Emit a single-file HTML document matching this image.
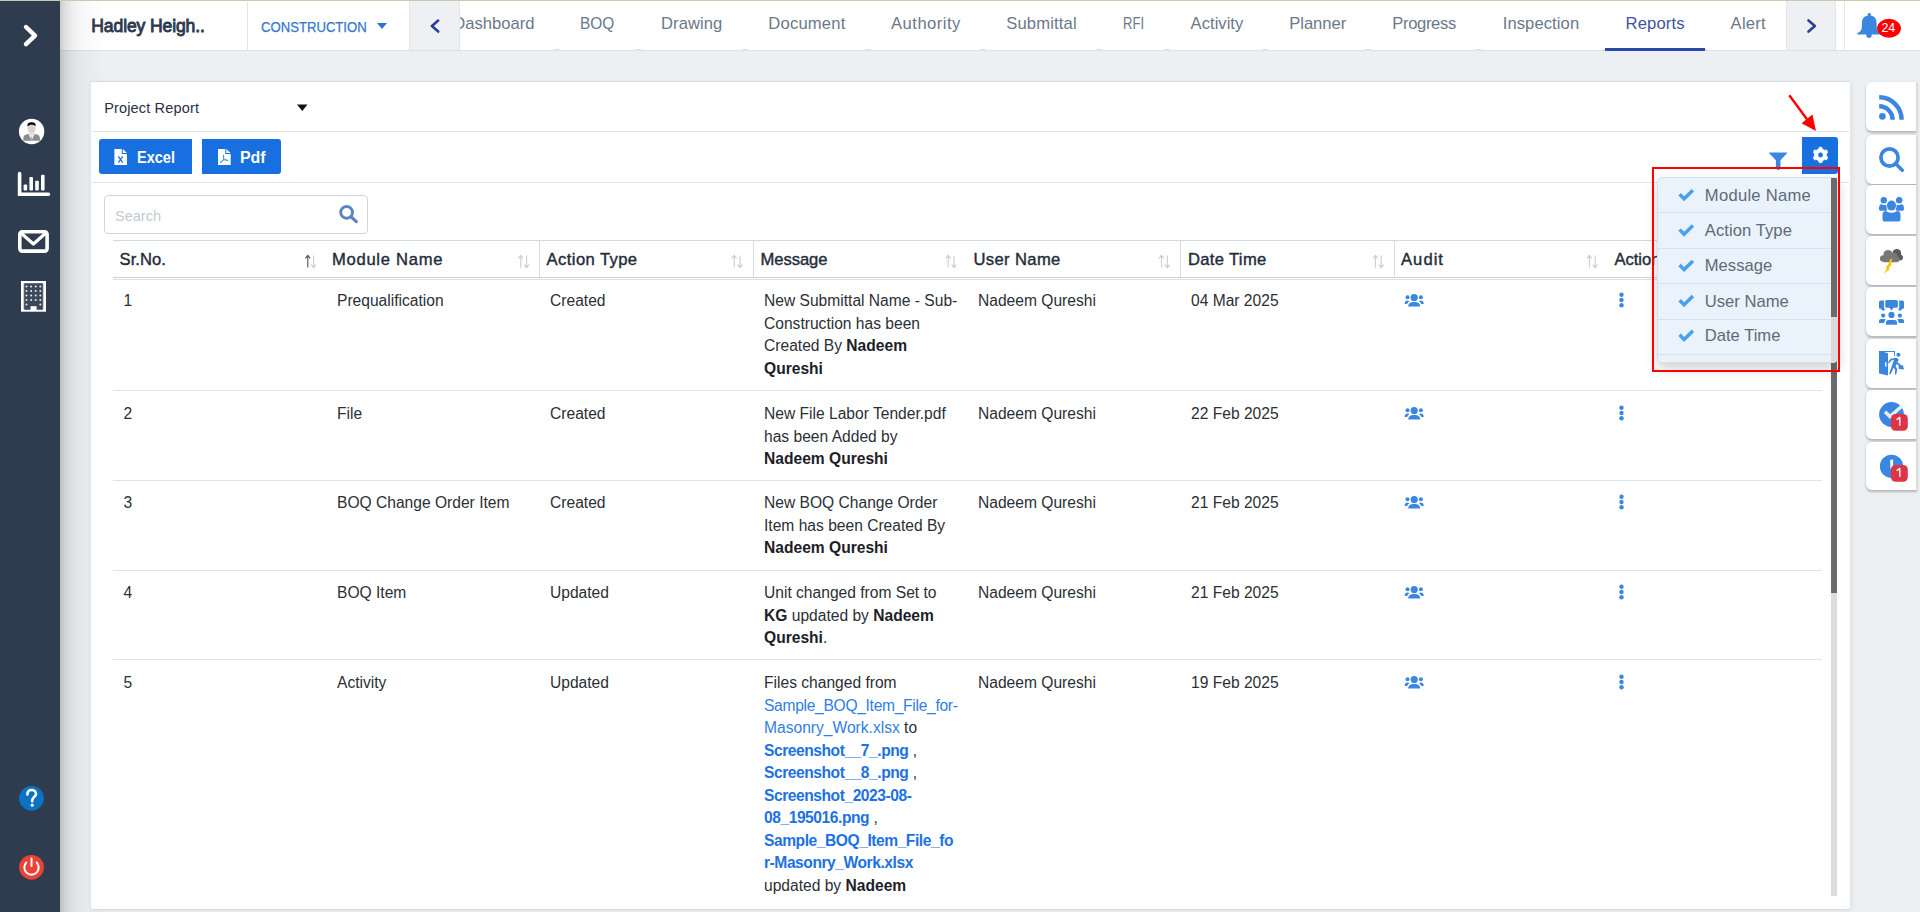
<!DOCTYPE html><html><head><meta charset="utf-8"><style>
*{margin:0;padding:0;box-sizing:border-box}
html,body{width:1920px;height:912px;overflow:hidden;background:#edf0f3;font-family:"Liberation Sans",sans-serif;color:#2b2f36}
.a{position:absolute;white-space:nowrap}
svg{position:absolute;overflow:visible}
b{font-weight:bold;color:#1d2127}
.lk{color:#2f80e2}
.lkb{color:#1c72e4;font-weight:bold;letter-spacing:-0.45px}
.lk1{letter-spacing:-0.3px}
</style></head><body>
<div class="a" style="left:60px;top:0;width:1860px;height:51px;background:#fff;border-bottom:1px solid #dde1e6"></div>
<div class="a" style="left:247px;top:2px;width:1px;height:49px;background:#e1e5ea"></div>
<div class="a" style="left:409px;top:1px;width:51px;height:49px;background:#eef0f4;border-left:1px solid #e3e6ea;border-right:1px solid #e3e6ea"></div>
<div class="a" style="left:1786px;top:1px;width:50px;height:49px;background:#eef0f4;border-left:1px solid #e3e6ea;border-right:1px solid #e3e6ea"></div>
<div class="a" style="left:1844px;top:1px;width:1px;height:49px;background:#e3e6ea"></div>
<div class="a" style="left:91.30px;top:15.46px;font-size:17.60px;line-height:22.88px;color:#2c3a4d;letter-spacing:-0.14px;-webkit-text-stroke:0.85px #2c3a4d;">Hadley Heigh..</div>
<div class="a" style="left:260.50px;top:17.65px;font-size:14.00px;line-height:18.20px;color:#3577cf;transform:scaleX(0.9373);transform-origin:0.00px 0;-webkit-text-stroke:0.25px #3577cf;">CONSTRUCTION</div>
<svg style="left:0;top:0" width="1" height="1"><path d="M377 23 L387 23 L382 29 Z" fill="#2f74cc"/></svg>
<svg style="left:0;top:0" width="1" height="1"><path d="M438.2 20.6 L431.9 26.1 L438.2 31.6" fill="none" stroke="#2b3f99" stroke-width="2.6" stroke-linecap="round" stroke-linejoin="round"/></svg>
<svg style="left:0;top:0" width="1" height="1"><path d="M1808.5 20.4 L1814.9 26 L1808.5 31.6" fill="none" stroke="#2b3f99" stroke-width="2.6" stroke-linecap="round" stroke-linejoin="round"/></svg>
<div class="a" style="left:460px;top:0;width:1326px;height:50px;overflow:hidden">
<div class="a" style="left:-6.77px;top:12.85px;font-size:16.60px;line-height:21.58px;color:#6b788a;">Dashboard</div>
<div class="a" style="left:120.20px;top:12.85px;font-size:16.60px;line-height:21.58px;color:#6b788a;transform:scaleX(0.9314);transform-origin:0.00px 0;">BOQ</div>
<div class="a" style="left:201.00px;top:12.85px;font-size:16.60px;line-height:21.58px;color:#6b788a;letter-spacing:0.06px;">Drawing</div>
<div class="a" style="left:308.30px;top:12.85px;font-size:16.60px;line-height:21.58px;color:#6b788a;letter-spacing:0.20px;">Document</div>
<div class="a" style="left:431.00px;top:12.85px;font-size:16.60px;line-height:21.58px;color:#6b788a;letter-spacing:0.49px;">Authority</div>
<div class="a" style="left:546.25px;top:12.85px;font-size:16.60px;line-height:21.58px;color:#6b788a;letter-spacing:0.15px;">Submittal</div>
<div class="a" style="left:663.00px;top:12.85px;font-size:16.60px;line-height:21.58px;color:#6b788a;transform:scaleX(0.7858);transform-origin:0.00px 0;">RFI</div>
<div class="a" style="left:730.60px;top:12.85px;font-size:16.60px;line-height:21.58px;color:#6b788a;letter-spacing:0.02px;">Activity</div>
<div class="a" style="left:829.20px;top:12.85px;font-size:16.60px;line-height:21.58px;color:#6b788a;letter-spacing:-0.02px;">Planner</div>
<div class="a" style="left:932.30px;top:12.85px;font-size:16.60px;line-height:21.58px;color:#6b788a;letter-spacing:-0.35px;">Progress</div>
<div class="a" style="left:1042.70px;top:12.85px;font-size:16.60px;line-height:21.58px;color:#6b788a;letter-spacing:0.09px;">Inspection</div>
<div class="a" style="left:1165.60px;top:12.85px;font-size:16.60px;line-height:21.58px;color:#3d52a3;letter-spacing:0.13px;">Reports</div>
<div class="a" style="left:1270.60px;top:12.85px;font-size:16.60px;line-height:21.58px;color:#6b788a;letter-spacing:0.25px;">Alert</div>
<div class="a" style="left:94.0px;top:49px;width:6px;height:1px;background:#dfe3e8"></div>
<div class="a" style="left:174.5px;top:49px;width:6px;height:1px;background:#dfe3e8"></div>
<div class="a" style="left:282.0px;top:49px;width:6px;height:1px;background:#dfe3e8"></div>
<div class="a" style="left:405.0px;top:49px;width:6px;height:1px;background:#dfe3e8"></div>
<div class="a" style="left:520.0px;top:49px;width:6px;height:1px;background:#dfe3e8"></div>
<div class="a" style="left:636.0px;top:49px;width:6px;height:1px;background:#dfe3e8"></div>
<div class="a" style="left:704.0px;top:49px;width:6px;height:1px;background:#dfe3e8"></div>
<div class="a" style="left:802.0px;top:49px;width:6px;height:1px;background:#dfe3e8"></div>
<div class="a" style="left:905.0px;top:49px;width:6px;height:1px;background:#dfe3e8"></div>
<div class="a" style="left:1015.0px;top:49px;width:6px;height:1px;background:#dfe3e8"></div>
<div class="a" style="left:1142.0px;top:49px;width:6px;height:1px;background:#dfe3e8"></div>
<div class="a" style="left:1241.0px;top:49px;width:6px;height:1px;background:#dfe3e8"></div>
</div>
<div class="a" style="left:1605px;top:48px;width:100px;height:3px;background:#2b49a6"></div>
<svg style="left:0;top:0" width="1" height="1">
<circle cx="1869.3" cy="14.6" r="1.7" fill="#3b87e0"/>
<path d="M1862 22.5 C1862 18 1865 15.6 1869.3 15.6 C1873.6 15.6 1876.5 18 1876.5 22.5 L1876.8 28 C1877 31 1878.5 32.3 1879.5 33.3 L1879.5 34.6 L1857.3 34.6 L1857.3 33.3 C1858.8 32.3 1861.5 31 1861.7 28 Z" fill="#3b87e0"/>
<circle cx="1869" cy="35.2" r="2.7" fill="#3b87e0"/>
<ellipse cx="1889" cy="28.35" rx="11.9" ry="9.5" fill="#ff0000"/>
</svg>
<div class="a" style="left:1881.50px;top:20.34px;font-size:12.50px;line-height:16.25px;color:#fff;letter-spacing:-0.30px;">24</div>
<div class="a" style="left:0;top:0;width:60px;height:912px;background:#2f3c4f"></div>
<div class="a" style="left:60px;top:0;width:45px;height:912px;background:linear-gradient(to right,rgba(0,0,0,.20),rgba(0,0,0,.12) 12%,rgba(0,0,0,.06) 30%,rgba(0,0,0,.025) 55%,rgba(0,0,0,0))"></div>
<div class="a" style="left:0;top:0;width:1920px;height:1px;background:#c3cbb1"></div>
<svg style="left:0;top:0" width="1" height="1">
<path d="M26 27 L35 35.6 L26 44.2" fill="none" stroke="#fff" stroke-width="4.4" stroke-linecap="round" stroke-linejoin="round"/>
<circle cx="31.6" cy="131.45" r="12.7" fill="#fff"/>
<path d="M23.2 140.7 L23.5 137 C23.8 135.5 25 134.8 27 134.3 L30 133.5 L33.2 133.5 L36.2 134.3 C38.2 134.8 39.4 135.5 39.7 137 L40.2 140.7 Z" fill="#8c8c8c"/>
<path d="M28.3 133.8 L31.6 140.5 L35 133.8 Z" fill="#e8e8e8"/>
<path d="M31.6 135.5 L31 139.5 L31.6 140.5 L32.2 139.5 Z" fill="#a8a8a8"/>
<rect x="29.8" y="130.5" width="3.6" height="3.5" fill="#dedede"/>
<ellipse cx="31.6" cy="128.4" rx="4.1" ry="4.8" fill="#d4d4d4"/>
<path d="M27.5 126.6 C27.1 123 29 122.2 31.6 122.2 C34.2 122.2 35.9 123 35.7 126.2 C34.6 124.9 32.6 124.6 31.6 124.7 C30 124.7 28.5 125.1 27.5 126.6 Z" fill="#000"/>
<path d="M19.6 173.5 L19.6 194.2 L48.5 194.2" fill="none" stroke="#fff" stroke-width="3.6" stroke-linecap="round"/>
<rect x="23.6" y="184.6" width="3.6" height="6" rx="1" fill="#fff"/>
<rect x="29.4" y="177" width="3.6" height="13.6" rx="1" fill="#fff"/>
<rect x="35.2" y="180.7" width="3.6" height="9.9" rx="1" fill="#fff"/>
<rect x="41" y="174.7" width="3.6" height="15.9" rx="1" fill="#fff"/>
<rect x="19.8" y="231.8" width="27.3" height="19.3" rx="2.5" fill="none" stroke="#fff" stroke-width="3.6"/>
<path d="M21.5 233.5 L33.4 244 L45.3 233.5" fill="none" stroke="#fff" stroke-width="3.2" stroke-linejoin="round"/>
<rect x="21" y="281" width="25" height="30.7" fill="#fff"/>
<rect x="23.6" y="283" width="19.8" height="27" rx="1" fill="#8a93a0"/>
<rect x="24.3" y="283.6" width="18.4" height="25.8" rx="1" fill="#3b475a"/>
<rect x="30.5" y="306.2" width="6.1" height="4" fill="#fff"/>
</svg>
<svg style="left:0;top:0" width="1" height="1"><circle cx="26.5" cy="286.5" r="1" fill="#e8ebef"/><circle cx="31.1" cy="286.5" r="1" fill="#e8ebef"/><circle cx="35.7" cy="286.5" r="1" fill="#e8ebef"/><circle cx="40.3" cy="286.5" r="1" fill="#e8ebef"/><circle cx="26.5" cy="291.0" r="1" fill="#e8ebef"/><circle cx="31.1" cy="291.0" r="1" fill="#e8ebef"/><circle cx="35.7" cy="291.0" r="1" fill="#e8ebef"/><circle cx="40.3" cy="291.0" r="1" fill="#e8ebef"/><circle cx="26.5" cy="295.5" r="1" fill="#e8ebef"/><circle cx="31.1" cy="295.5" r="1" fill="#e8ebef"/><circle cx="35.7" cy="295.5" r="1" fill="#e8ebef"/><circle cx="40.3" cy="295.5" r="1" fill="#e8ebef"/><circle cx="26.5" cy="300.0" r="1" fill="#e8ebef"/><circle cx="31.1" cy="300.0" r="1" fill="#e8ebef"/><circle cx="35.7" cy="300.0" r="1" fill="#e8ebef"/><circle cx="40.3" cy="300.0" r="1" fill="#e8ebef"/><circle cx="26.5" cy="304.5" r="1" fill="#e8ebef"/><circle cx="40.3" cy="304.5" r="1" fill="#e8ebef"/></svg>
<svg style="left:0;top:0" width="1" height="1">
<circle cx="31.5" cy="798.3" r="12.4" fill="#0b73c2"/>
<path d="M27.4 794.5 C27.4 791.5 29.3 790 31.7 790 C34.2 790 36 791.6 36 794 C36 796.6 32.5 797.2 32.2 800.2 L32.2 801.3" fill="none" stroke="#fff" stroke-width="2.6" stroke-linecap="round"/>
<circle cx="32.2" cy="805.2" r="1.6" fill="#fff"/>
<circle cx="31.5" cy="867.3" r="12.4" fill="#ea4335"/>
<path d="M26.3 862.5 A7.2 7.2 0 1 0 36.7 862.5" fill="none" stroke="#fff" stroke-width="2" stroke-linecap="round"/>
<path d="M31.5 858.5 L31.5 866" fill="none" stroke="#fff" stroke-width="2" stroke-linecap="round"/>
</svg>
<div class="a" style="left:90px;top:81px;width:1761px;height:829px;background:#fff;border:1px solid #e3e7eb;border-top-color:#d9dde2;border-bottom-color:#d9dde2;border-radius:0 4px 4px 4px;box-shadow:1px 1px 5px rgba(0,0,0,.07)"></div>
<div class="a" style="left:104.20px;top:98.85px;font-size:14.50px;line-height:18.85px;color:#283142;letter-spacing:0.16px;">Project Report</div>
<svg style="left:0;top:0" width="1" height="1"><path d="M297 104.5 L307.5 104.5 L302.25 111 Z" fill="#111"/></svg>
<div class="a" style="left:92px;top:131px;width:1757px;height:1px;background:#e2e6ea"></div>
<div class="a" style="left:92px;top:182px;width:1757px;height:1px;background:#e2e6ea"></div>
<div class="a" style="left:99px;top:139px;width:93px;height:35px;background:#186fe0;border-radius:3px 0 0 3px"></div>
<div class="a" style="left:202px;top:139px;width:79px;height:35px;background:#186fe0;border-radius:0 3px 3px 0"></div>
<svg style="left:0;top:0" width="1" height="1">
<path d="M114.4 149 L121.8 149 L121.8 154.1 L127 154.1 L127 165 L114.4 165 Z" fill="#fff"/>
<path d="M122.8 149 L127 153.1 L122.8 153.1 Z" fill="#fff"/>
<path d="M118.3 156.3 L122.7 162.6 M122.7 156.3 L118.3 162.6" stroke="#186fe0" stroke-width="1.25"/>
<path d="M218 149 L225.3 149 L225.3 154.1 L230.7 154.1 L230.7 165 L218 165 Z" fill="#fff"/>
<path d="M226.3 149 L230.7 153.1 L226.3 153.1 Z" fill="#fff"/>
<path d="M223.5 155.3 L223.8 159.5 L220.6 162.6 M223.8 159.5 L227.6 160.4" fill="none" stroke="#3a8ae8" stroke-width="1.1" stroke-linecap="round"/>
</svg>
<div class="a" style="left:137.10px;top:147.26px;font-size:16.80px;line-height:21.84px;color:#fff;font-weight:bold;transform:scaleX(0.8650);transform-origin:0.00px 0;">Excel</div>
<div class="a" style="left:240.00px;top:147.26px;font-size:16.80px;line-height:21.84px;color:#fff;font-weight:bold;transform:scaleX(0.9472);transform-origin:0.00px 0;">Pdf</div>
<svg style="left:0;top:0" width="1" height="1">
<path d="M1769.3 152.4 Q1768.8 152.4 1769.2 153.2 L1775.9 160.2 L1775.9 168.8 L1778.2 170.2 L1780.5 168.8 L1780.5 160.2 L1787 153.2 Q1787.4 152.4 1786.9 152.4 Z" fill="#3b86e0"/>
</svg>
<div class="a" style="left:1802px;top:137px;width:36px;height:37px;background:#186fe0;border-radius:0 3px 3px 0"></div>
<svg style="left:0;top:0" width="1" height="1"><path d="M1817.45 149.62 L1818.66 148.88 L1818.99 147.15 L1822.01 147.15 L1822.34 148.88 L1823.55 149.62 L1823.55 149.62 L1824.80 150.29 L1826.46 149.72 L1827.97 152.33 L1826.64 153.48 L1826.60 154.90 L1826.60 154.90 L1826.64 156.32 L1827.97 157.47 L1826.46 160.08 L1824.80 159.51 L1823.55 160.18 L1823.55 160.18 L1822.34 160.92 L1822.01 162.65 L1818.99 162.65 L1818.66 160.92 L1817.45 160.18 L1817.45 160.18 L1816.20 159.51 L1814.54 160.08 L1813.03 157.47 L1814.36 156.32 L1814.40 154.90 L1814.40 154.90 L1814.36 153.48 L1813.03 152.33 L1814.54 149.72 L1816.20 150.29 L1817.45 149.62 Z M1823.1 154.9 A2.6 2.6 0 1 0 1817.9 154.9 A2.6 2.6 0 1 0 1823.1 154.9 Z" fill="#fff" fill-rule="evenodd" stroke="#fff" stroke-width="0.5" stroke-linejoin="round"/></svg>
<div class="a" style="left:104px;top:195px;width:264px;height:39px;border:1px solid #cfd6de;border-radius:4px;background:#fff"></div>
<div class="a" style="left:115.00px;top:207.25px;font-size:14.50px;line-height:18.85px;color:#c3cad4;letter-spacing:0.01px;">Search</div>
<svg style="left:0;top:0" width="1" height="1">
<circle cx="346.6" cy="212.4" r="5.9" fill="none" stroke="#5a84be" stroke-width="2.9"/>
<path d="M351 216.8 L356.3 221.6" stroke="#5a84be" stroke-width="3.2" stroke-linecap="round"/>
</svg>
<div class="a" style="left:113px;top:240px;width:1709px;height:1px;background:#d3d9e0"></div>
<div class="a" style="left:113px;top:277px;width:1709px;height:1px;background:#cdd3da"></div>
<div class="a" style="left:113px;top:279px;width:1709px;height:1px;background:#dde1e6"></div>
<div class="a" style="left:539px;top:241px;width:1px;height:36px;background:#d8dde3"></div>
<div class="a" style="left:753px;top:241px;width:1px;height:36px;background:#d8dde3"></div>
<div class="a" style="left:1180px;top:241px;width:1px;height:36px;background:#d8dde3"></div>
<div class="a" style="left:1394px;top:241px;width:1px;height:36px;background:#d8dde3"></div>
<div class="a" style="left:119.50px;top:249.05px;font-size:16.60px;line-height:21.58px;color:#1f2c3b;letter-spacing:0.07px;-webkit-text-stroke:0.4px #1f2c3b;">Sr.No.</div>
<div class="a" style="left:332.00px;top:249.05px;font-size:16.60px;line-height:21.58px;color:#1f2c3b;letter-spacing:0.71px;-webkit-text-stroke:0.4px #1f2c3b;">Module Name</div>
<div class="a" style="left:546.60px;top:249.05px;font-size:16.60px;line-height:21.58px;color:#1f2c3b;letter-spacing:0.41px;-webkit-text-stroke:0.4px #1f2c3b;">Action Type</div>
<div class="a" style="left:760.60px;top:249.05px;font-size:16.60px;line-height:21.58px;color:#1f2c3b;letter-spacing:-0.07px;-webkit-text-stroke:0.4px #1f2c3b;">Message</div>
<div class="a" style="left:973.50px;top:249.05px;font-size:16.60px;line-height:21.58px;color:#1f2c3b;letter-spacing:0.36px;-webkit-text-stroke:0.4px #1f2c3b;">User Name</div>
<div class="a" style="left:1187.90px;top:249.05px;font-size:16.60px;line-height:21.58px;color:#1f2c3b;letter-spacing:0.35px;-webkit-text-stroke:0.4px #1f2c3b;">Date Time</div>
<div class="a" style="left:1401.00px;top:249.05px;font-size:16.60px;line-height:21.58px;color:#1f2c3b;letter-spacing:1.04px;-webkit-text-stroke:0.4px #1f2c3b;">Audit</div>
<div class="a" style="left:1614.40px;top:249.05px;font-size:16.60px;line-height:21.58px;color:#1f2c3b;-webkit-text-stroke:0.4px #1f2c3b;">Action</div>
<svg style="left:0;top:0" width="1" height="1"><path d="M307.8 267.5 L307.8 255.5 M305.4 258.3 L307.8 255.3 L310.2 258.3" fill="none" stroke="#50555e" stroke-width="1.1"/><path d="M313.6 255.5 L313.6 267.5 M311.2 264.7 L313.6 267.7 L316.0 264.7" fill="none" stroke="#c8cdd4" stroke-width="1.1"/><path d="M520.8 267.5 L520.8 255.5 M518.4 258.3 L520.8 255.3 L523.2 258.3" fill="none" stroke="#c8cdd4" stroke-width="1.1"/><path d="M526.6 255.5 L526.6 267.5 M524.2 264.7 L526.6 267.7 L529.0 264.7" fill="none" stroke="#c8cdd4" stroke-width="1.1"/><path d="M734.2 267.5 L734.2 255.5 M731.8 258.3 L734.2 255.3 L736.6 258.3" fill="none" stroke="#c8cdd4" stroke-width="1.1"/><path d="M740.0 255.5 L740.0 267.5 M737.6 264.7 L740.0 267.7 L742.4 264.7" fill="none" stroke="#c8cdd4" stroke-width="1.1"/><path d="M948.2 267.5 L948.2 255.5 M945.8 258.3 L948.2 255.3 L950.6 258.3" fill="none" stroke="#c8cdd4" stroke-width="1.1"/><path d="M954.0 255.5 L954.0 267.5 M951.6 264.7 L954.0 267.7 L956.4 264.7" fill="none" stroke="#c8cdd4" stroke-width="1.1"/><path d="M1161.5 267.5 L1161.5 255.5 M1159.1 258.3 L1161.5 255.3 L1163.9 258.3" fill="none" stroke="#c8cdd4" stroke-width="1.1"/><path d="M1167.3 255.5 L1167.3 267.5 M1164.9 264.7 L1167.3 267.7 L1169.7 264.7" fill="none" stroke="#c8cdd4" stroke-width="1.1"/><path d="M1375.4 267.5 L1375.4 255.5 M1373.0 258.3 L1375.4 255.3 L1377.8 258.3" fill="none" stroke="#c8cdd4" stroke-width="1.1"/><path d="M1381.2 255.5 L1381.2 267.5 M1378.8 264.7 L1381.2 267.7 L1383.6 264.7" fill="none" stroke="#c8cdd4" stroke-width="1.1"/><path d="M1589.4 267.5 L1589.4 255.5 M1587.0 258.3 L1589.4 255.3 L1591.8 258.3" fill="none" stroke="#c8cdd4" stroke-width="1.1"/><path d="M1595.2 255.5 L1595.2 267.5 M1592.8 264.7 L1595.2 267.7 L1597.6 264.7" fill="none" stroke="#c8cdd4" stroke-width="1.1"/></svg>
<div class="a" style="left:113px;top:390px;width:1709px;height:1px;background:#dfe3e7"></div>
<div class="a" style="left:113px;top:480px;width:1709px;height:1px;background:#dfe3e7"></div>
<div class="a" style="left:113px;top:570px;width:1709px;height:1px;background:#dfe3e7"></div>
<div class="a" style="left:113px;top:659px;width:1709px;height:1px;background:#dfe3e7"></div>
<div class="a" style="left:123.60px;top:291.05px;font-size:15.60px;line-height:20.28px;color:#2b2f36;">1</div>
<div class="a" style="left:337.00px;top:291.05px;font-size:15.60px;line-height:20.28px;color:#2b2f36;">Prequalification</div>
<div class="a" style="left:550.00px;top:291.05px;font-size:15.60px;line-height:20.28px;color:#2b2f36;">Created</div>
<div class="a" style="left:764.00px;top:291.05px;font-size:15.60px;line-height:20.28px;color:#2b2f36;">New Submittal Name - Sub-</div>
<div class="a" style="left:764.00px;top:313.55px;font-size:15.60px;line-height:20.28px;color:#2b2f36;">Construction has been</div>
<div class="a" style="left:764.00px;top:336.05px;font-size:15.60px;line-height:20.28px;color:#2b2f36;">Created By <b>Nadeem</b></div>
<div class="a" style="left:764.00px;top:358.55px;font-size:15.60px;line-height:20.28px;color:#2b2f36;"><b>Qureshi</b></div>
<div class="a" style="left:978.00px;top:291.05px;font-size:15.60px;line-height:20.28px;color:#2b2f36;">Nadeem Qureshi</div>
<div class="a" style="left:1191.00px;top:291.05px;font-size:15.60px;line-height:20.28px;color:#2b2f36;">04 Mar 2025</div>
<div class="a" style="left:123.60px;top:404.05px;font-size:15.60px;line-height:20.28px;color:#2b2f36;">2</div>
<div class="a" style="left:337.00px;top:404.05px;font-size:15.60px;line-height:20.28px;color:#2b2f36;">File</div>
<div class="a" style="left:550.00px;top:404.05px;font-size:15.60px;line-height:20.28px;color:#2b2f36;">Created</div>
<div class="a" style="left:764.00px;top:404.05px;font-size:15.60px;line-height:20.28px;color:#2b2f36;">New File Labor Tender.pdf</div>
<div class="a" style="left:764.00px;top:426.55px;font-size:15.60px;line-height:20.28px;color:#2b2f36;">has been Added by</div>
<div class="a" style="left:764.00px;top:449.05px;font-size:15.60px;line-height:20.28px;color:#2b2f36;"><b>Nadeem Qureshi</b></div>
<div class="a" style="left:978.00px;top:404.05px;font-size:15.60px;line-height:20.28px;color:#2b2f36;">Nadeem Qureshi</div>
<div class="a" style="left:1191.00px;top:404.05px;font-size:15.60px;line-height:20.28px;color:#2b2f36;">22 Feb 2025</div>
<div class="a" style="left:123.60px;top:493.05px;font-size:15.60px;line-height:20.28px;color:#2b2f36;">3</div>
<div class="a" style="left:337.00px;top:493.05px;font-size:15.60px;line-height:20.28px;color:#2b2f36;">BOQ Change Order Item</div>
<div class="a" style="left:550.00px;top:493.05px;font-size:15.60px;line-height:20.28px;color:#2b2f36;">Created</div>
<div class="a" style="left:764.00px;top:493.05px;font-size:15.60px;line-height:20.28px;color:#2b2f36;">New BOQ Change Order</div>
<div class="a" style="left:764.00px;top:515.55px;font-size:15.60px;line-height:20.28px;color:#2b2f36;">Item has been Created By</div>
<div class="a" style="left:764.00px;top:538.05px;font-size:15.60px;line-height:20.28px;color:#2b2f36;"><b>Nadeem Qureshi</b></div>
<div class="a" style="left:978.00px;top:493.05px;font-size:15.60px;line-height:20.28px;color:#2b2f36;">Nadeem Qureshi</div>
<div class="a" style="left:1191.00px;top:493.05px;font-size:15.60px;line-height:20.28px;color:#2b2f36;">21 Feb 2025</div>
<div class="a" style="left:123.60px;top:583.05px;font-size:15.60px;line-height:20.28px;color:#2b2f36;">4</div>
<div class="a" style="left:337.00px;top:583.05px;font-size:15.60px;line-height:20.28px;color:#2b2f36;">BOQ Item</div>
<div class="a" style="left:550.00px;top:583.05px;font-size:15.60px;line-height:20.28px;color:#2b2f36;">Updated</div>
<div class="a" style="left:764.00px;top:583.05px;font-size:15.60px;line-height:20.28px;color:#2b2f36;">Unit changed from Set to</div>
<div class="a" style="left:764.00px;top:605.55px;font-size:15.60px;line-height:20.28px;color:#2b2f36;"><b>KG</b> updated by <b>Nadeem</b></div>
<div class="a" style="left:764.00px;top:628.05px;font-size:15.60px;line-height:20.28px;color:#2b2f36;"><b>Qureshi</b>.</div>
<div class="a" style="left:978.00px;top:583.05px;font-size:15.60px;line-height:20.28px;color:#2b2f36;">Nadeem Qureshi</div>
<div class="a" style="left:1191.00px;top:583.05px;font-size:15.60px;line-height:20.28px;color:#2b2f36;">21 Feb 2025</div>
<div class="a" style="left:123.60px;top:673.05px;font-size:15.60px;line-height:20.28px;color:#2b2f36;">5</div>
<div class="a" style="left:337.00px;top:673.05px;font-size:15.60px;line-height:20.28px;color:#2b2f36;">Activity</div>
<div class="a" style="left:550.00px;top:673.05px;font-size:15.60px;line-height:20.28px;color:#2b2f36;">Updated</div>
<div class="a" style="left:764.00px;top:673.05px;font-size:15.60px;line-height:20.28px;color:#2b2f36;">Files changed from</div>
<div class="a" style="left:764.00px;top:695.55px;font-size:15.60px;line-height:20.28px;color:#2b2f36;"><span class="lk lk1">Sample_BOQ_Item_File_for-</span></div>
<div class="a" style="left:764.00px;top:718.05px;font-size:15.60px;line-height:20.28px;color:#2b2f36;"><span class="lk">Masonry_Work.xlsx</span> to</div>
<div class="a" style="left:764.00px;top:740.55px;font-size:15.60px;line-height:20.28px;color:#2b2f36;"><span class="lkb">Screenshot__7_.png</span> ,</div>
<div class="a" style="left:764.00px;top:763.05px;font-size:15.60px;line-height:20.28px;color:#2b2f36;"><span class="lkb">Screenshot__8_.png</span> ,</div>
<div class="a" style="left:764.00px;top:785.55px;font-size:15.60px;line-height:20.28px;color:#2b2f36;"><span class="lkb">Screenshot_2023-08-</span></div>
<div class="a" style="left:764.00px;top:808.05px;font-size:15.60px;line-height:20.28px;color:#2b2f36;"><span class="lkb">08_195016.png</span> ,</div>
<div class="a" style="left:764.00px;top:830.55px;font-size:15.60px;line-height:20.28px;color:#2b2f36;"><span class="lkb">Sample_BOQ_Item_File_fo</span></div>
<div class="a" style="left:764.00px;top:853.05px;font-size:15.60px;line-height:20.28px;color:#2b2f36;"><span class="lkb">r-Masonry_Work.xlsx</span></div>
<div class="a" style="left:764.00px;top:875.55px;font-size:15.60px;line-height:20.28px;color:#2b2f36;">updated by <b>Nadeem</b></div>
<div class="a" style="left:978.00px;top:673.05px;font-size:15.60px;line-height:20.28px;color:#2b2f36;">Nadeem Qureshi</div>
<div class="a" style="left:1191.00px;top:673.05px;font-size:15.60px;line-height:20.28px;color:#2b2f36;">19 Feb 2025</div>
<svg style="left:0;top:0" width="1" height="1"><defs><g id="aud" fill="#3b86e0">
<circle cx="1414.2" cy="298" r="3.6"/>
<path d="M1408.2 307 C1408.2 303.5 1410.5 302.3 1414.2 302.3 C1417.9 302.3 1420.2 303.5 1420.2 307 Z"/>
<circle cx="1407.5" cy="297.6" r="2"/>
<circle cx="1420.9" cy="297.6" r="2"/>
<path d="M1404.7 304.5 C1404.7 301.8 1405.8 301 1407.6 301 C1408.4 301 1409 301.2 1409.4 301.6 C1408 302.5 1407.3 303.5 1407.2 304.5 Z"/>
<path d="M1423.7 304.5 C1423.7 301.8 1422.6 301 1420.8 301 C1420 301 1419.4 301.2 1419 301.6 C1420.4 302.5 1421.1 303.5 1421.2 304.5 Z"/>
</g></defs><use href="#aud" x="0" y="-0.4"/><circle cx="1621.5" cy="294.80" r="2.2" fill="#3b86e0"/><circle cx="1621.5" cy="300.05" r="2.2" fill="#3b86e0"/><circle cx="1621.5" cy="305.30" r="2.2" fill="#3b86e0"/><use href="#aud" x="0" y="112.6"/><circle cx="1621.5" cy="407.80" r="2.2" fill="#3b86e0"/><circle cx="1621.5" cy="413.05" r="2.2" fill="#3b86e0"/><circle cx="1621.5" cy="418.30" r="2.2" fill="#3b86e0"/><use href="#aud" x="0" y="201.6"/><circle cx="1621.5" cy="496.80" r="2.2" fill="#3b86e0"/><circle cx="1621.5" cy="502.05" r="2.2" fill="#3b86e0"/><circle cx="1621.5" cy="507.30" r="2.2" fill="#3b86e0"/><use href="#aud" x="0" y="291.6"/><circle cx="1621.5" cy="586.80" r="2.2" fill="#3b86e0"/><circle cx="1621.5" cy="592.05" r="2.2" fill="#3b86e0"/><circle cx="1621.5" cy="597.30" r="2.2" fill="#3b86e0"/><use href="#aud" x="0" y="381.6"/><circle cx="1621.5" cy="676.80" r="2.2" fill="#3b86e0"/><circle cx="1621.5" cy="682.05" r="2.2" fill="#3b86e0"/><circle cx="1621.5" cy="687.30" r="2.2" fill="#3b86e0"/></svg>
<div class="a" style="left:1831px;top:183px;width:6px;height:713px;background:#dcdcdc"></div>
<div class="a" style="left:1831px;top:183px;width:6px;height:410px;background:#6b6b6b"></div>
<div class="a" style="left:1866px;top:82.0px;width:51px;height:48.5px;background:#fff;border-right:1px solid #d9dde2;border-radius:6px 0 0 6px;box-shadow:0 1.5px 2.5px rgba(0,0,0,.25)"></div>
<div class="a" style="left:1866px;top:135.0px;width:51px;height:48.5px;background:#fff;border-right:1px solid #d9dde2;border-radius:6px 0 0 6px;box-shadow:0 1.5px 2.5px rgba(0,0,0,.25)"></div>
<div class="a" style="left:1866px;top:185.0px;width:51px;height:48.5px;background:#fff;border-right:1px solid #d9dde2;border-radius:6px 0 0 6px;box-shadow:0 1.5px 2.5px rgba(0,0,0,.25)"></div>
<div class="a" style="left:1866px;top:236.0px;width:51px;height:48.5px;background:#fff;border-right:1px solid #d9dde2;border-radius:6px 0 0 6px;box-shadow:0 1.5px 2.5px rgba(0,0,0,.25)"></div>
<div class="a" style="left:1866px;top:287.0px;width:51px;height:48.5px;background:#fff;border-right:1px solid #d9dde2;border-radius:6px 0 0 6px;box-shadow:0 1.5px 2.5px rgba(0,0,0,.25)"></div>
<div class="a" style="left:1866px;top:339.0px;width:51px;height:48.5px;background:#fff;border-right:1px solid #d9dde2;border-radius:6px 0 0 6px;box-shadow:0 1.5px 2.5px rgba(0,0,0,.25)"></div>
<div class="a" style="left:1866px;top:390.0px;width:51px;height:48.5px;background:#fff;border-right:1px solid #d9dde2;border-radius:6px 0 0 6px;box-shadow:0 1.5px 2.5px rgba(0,0,0,.25)"></div>
<div class="a" style="left:1866px;top:441.5px;width:51px;height:48.5px;background:#fff;border-right:1px solid #d9dde2;border-radius:6px 0 0 6px;box-shadow:0 1.5px 2.5px rgba(0,0,0,.25)"></div>
<svg style="left:0;top:0" width="1" height="1">
<g fill="#3a86e0">
<circle cx="1882.4" cy="116.4" r="3.3"/>
<path d="M1879.2 106.3 A13.4 13.4 0 0 1 1892.6 119.7" fill="none" stroke="#3a86e0" stroke-width="4.4"/>
<path d="M1879.2 97.3 A22.4 22.4 0 0 1 1901.6 119.7" fill="none" stroke="#3a86e0" stroke-width="4.4"/>
</g>
<circle cx="1889.5" cy="157.5" r="8.6" fill="none" stroke="#3a86e0" stroke-width="3.7"/>
<path d="M1895.8 163.8 L1902.3 170.2" stroke="#3a86e0" stroke-width="3.6" stroke-linecap="round"/>
<g fill="#3a86e0">
<circle cx="1883.8" cy="200.3" r="3.2"/><circle cx="1899.2" cy="200.3" r="3.2"/>
<path d="M1879 209 C1879 205.5 1880 204 1881.5 204.2 C1882.5 205 1884.5 205.3 1886.5 204.8 C1886.2 206.5 1886.8 209 1887.5 210 L1886 210.8 L1880.8 210.8 C1879.8 210.8 1879 210 1879 209 Z"/>
<path d="M1904 209 C1904 205.5 1903 204 1901.5 204.2 C1900.5 205 1898.5 205.3 1896.5 204.8 C1896.8 206.5 1896.2 209 1895.5 210 L1897 210.8 L1902.2 210.8 C1903.2 210.8 1904 210 1904 209 Z"/>
<ellipse cx="1891.5" cy="205.6" rx="4.5" ry="5"/>
<path d="M1882.5 219 L1882.5 214.5 C1882.5 212 1884 211 1886 211 C1887.5 212.2 1889.5 212.8 1891.5 212.8 C1893.5 212.8 1895.5 212.2 1897 211 C1899 211 1900.5 212 1900.5 214.5 L1900.5 219 C1900.5 220.6 1899.6 221.6 1898 221.6 L1885 221.6 C1883.4 221.6 1882.5 220.6 1882.5 219 Z"/>
</g>
<g fill="#5b5b5b">
<circle cx="1896.8" cy="253.3" r="4.4"/><circle cx="1900.2" cy="257.6" r="2.8"/>
</g>
<g fill="#777">
<circle cx="1888" cy="254.6" r="4.6"/><circle cx="1883.2" cy="258.4" r="3.2"/><circle cx="1893.4" cy="256.8" r="4"/>
<rect x="1882" y="256.5" width="17.5" height="5.8" rx="2.8"/>
</g>
<path d="M1890.6 259 L1892.6 258.8 L1890.6 263.3 L1892 263.8 L1888.6 268.8 L1889.6 269.2 L1884.2 273.8 L1886.8 268.2 L1885.8 267.6 L1889 263.4 L1888.2 262.8 Z" fill="#f7c600"/>
<g fill="#3a86e0">
<path d="M1879 302 Q1879 300.5 1880.6 300.5 L1884 300.5 L1884 308.3 L1885.2 309.3 L1883.2 311 L1880.3 308.4 L1879 308.4 Z"/>
<path d="M1904 302 Q1904 300.5 1902.4 300.5 L1899.2 300.5 L1899.2 308.3 L1898 309.3 L1900 311 L1902.9 308.4 L1904 308.4 Z"/>
<path d="M1885.2 301.6 Q1885.2 300 1886.8 300 L1896.3 300 Q1897.9 300 1897.9 301.6 L1897.9 306.2 Q1897.9 307.7 1896.3 307.7 L1893.5 307.7 L1891.5 310.5 L1889.5 307.7 L1886.8 307.7 Q1885.2 307.7 1885.2 306.2 Z"/>
<circle cx="1883.2" cy="315.6" r="2.1"/><circle cx="1899.9" cy="315.6" r="2.1"/><circle cx="1891.5" cy="314.9" r="3.1"/>
<path d="M1879 323 L1879 321 Q1879 319 1881 319 L1885.6 319 L1884 323 Z"/>
<path d="M1904 323 L1904 321 Q1904 319 1902 319 L1897.4 319 L1899 323 Z"/>
<path d="M1886 324.8 L1886 322.5 Q1886 320 1888.5 320 L1894.5 320 Q1897 320 1897 322.5 L1897 324.8 Z"/>
</g>
<g fill="#3a86e0">
<path d="M1879 351 L1895 351 L1895 355.8 L1894 355.8 L1894 352 L1884 352 L1888 353.3 L1888 375.6 L1879 373.5 Z"/>
<rect x="1885" y="362.2" width="1.5" height="4.3" fill="#fff"/>
<circle cx="1898.4" cy="354.8" r="2"/>
<path d="M1888 362.5 L1890.5 358.8 L1896.5 357.8 L1898.8 359.5 L1897.3 362.5 L1900.5 364 L1899.5 365.6 L1896.5 364.2 L1895.6 366 L1897.3 369.5 L1896.2 374.5 L1894.8 374.5 L1895.2 370 L1893.5 367.5 L1892.2 371 L1890.5 374.3 L1889 374 L1894 359.8 L1891.4 360.5 L1889 363.5 Z"/>
<path d="M1898.5 364.5 L1903 365.5 L1904 369.5 L1898.8 369 Z"/>
</g>
<g>
<circle cx="1891.5" cy="414.5" r="12.4" fill="#3a86e0"/>
<path d="M1885 411.8 L1890 416.6 L1902 406" fill="none" stroke="#ececec" stroke-width="3.6"/>
<rect x="1891" y="414" width="16.8" height="16.8" rx="4.5" fill="#dc3545"/>
<circle cx="1891.5" cy="466.3" r="11.6" fill="#3a86e0"/>
<rect x="1890.3" y="459.6" width="2.8" height="9" fill="#fff"/>
<rect x="1891" y="465" width="16.8" height="16.8" rx="4.5" fill="#dc3545"/>
</g>
</svg>
<svg style="left:0;top:0" width="1" height="1"><path d="M1899.8 425.8 L1899.8 417.4 L1896.6 419.8" fill="none" stroke="#fff" stroke-width="1.35" stroke-linejoin="round"/><path d="M1899.8 476.8 L1899.8 468.4 L1896.6 470.8" fill="none" stroke="#fff" stroke-width="1.35" stroke-linejoin="round"/></svg>
<div class="a" style="left:1656.5px;top:177px;width:181px;height:186px;background:#eaf2fb;border:1px solid #d6e0ea;border-radius:5px;box-shadow:0 6px 14px rgba(0,0,0,.18)"></div>
<div class="a" style="left:1657.5px;top:212.0px;width:173.5px;height:1px;background:#d6e3ef"></div>
<div class="a" style="left:1657.5px;top:248.0px;width:173.5px;height:1px;background:#d6e3ef"></div>
<div class="a" style="left:1657.5px;top:283.0px;width:173.5px;height:1px;background:#d6e3ef"></div>
<div class="a" style="left:1657.5px;top:318.5px;width:173.5px;height:1px;background:#d6e3ef"></div>
<div class="a" style="left:1657.5px;top:354.0px;width:173.5px;height:1px;background:#d6e3ef"></div>
<div class="a" style="left:1704.80px;top:184.70px;font-size:16.60px;line-height:21.58px;color:#5e6a79;letter-spacing:0.27px;">Module Name</div>
<div class="a" style="left:1704.80px;top:220.05px;font-size:16.60px;line-height:21.58px;color:#5e6a79;letter-spacing:0.07px;">Action Type</div>
<div class="a" style="left:1704.80px;top:255.45px;font-size:16.60px;line-height:21.58px;color:#5e6a79;">Message</div>
<div class="a" style="left:1704.80px;top:290.65px;font-size:16.60px;line-height:21.58px;color:#5e6a79;">User Name</div>
<div class="a" style="left:1704.80px;top:325.25px;font-size:16.60px;line-height:21.58px;color:#5e6a79;">Date Time</div>
<svg style="left:0;top:0" width="1" height="1"><path d="M1679.6 194.2 L1684.1 198.8 L1692.9 190.2" fill="none" stroke="#47a2ec" stroke-width="3.5"/><path d="M1679.6 229.6 L1684.1 234.2 L1692.9 225.5" fill="none" stroke="#47a2ec" stroke-width="3.5"/><path d="M1679.6 265.0 L1684.1 269.6 L1692.9 260.9" fill="none" stroke="#47a2ec" stroke-width="3.5"/><path d="M1679.6 300.2 L1684.1 304.8 L1692.9 296.1" fill="none" stroke="#47a2ec" stroke-width="3.5"/><path d="M1679.6 334.8 L1684.1 339.4 L1692.9 330.7" fill="none" stroke="#47a2ec" stroke-width="3.5"/></svg>
<div class="a" style="left:1831px;top:178px;width:6px;height:185px;background:#d9d9d9;border-radius:0 4px 4px 0"></div>
<div class="a" style="left:1831px;top:178px;width:6px;height:139px;background:#6b6b6b"></div>
<div class="a" style="left:1652px;top:167px;width:188px;height:205px;border:2.3px solid #ff0000"></div>
<svg style="left:0;top:0" width="1" height="1">
<path d="M1789.3 95.3 L1809 122" stroke="#ff0000" stroke-width="2.4"/>
<path d="M1816 131 L1801.6 123.2 L1812.4 114.6 Z" fill="#ff0000"/>
</svg>
<!--BODY-->
</body></html>
